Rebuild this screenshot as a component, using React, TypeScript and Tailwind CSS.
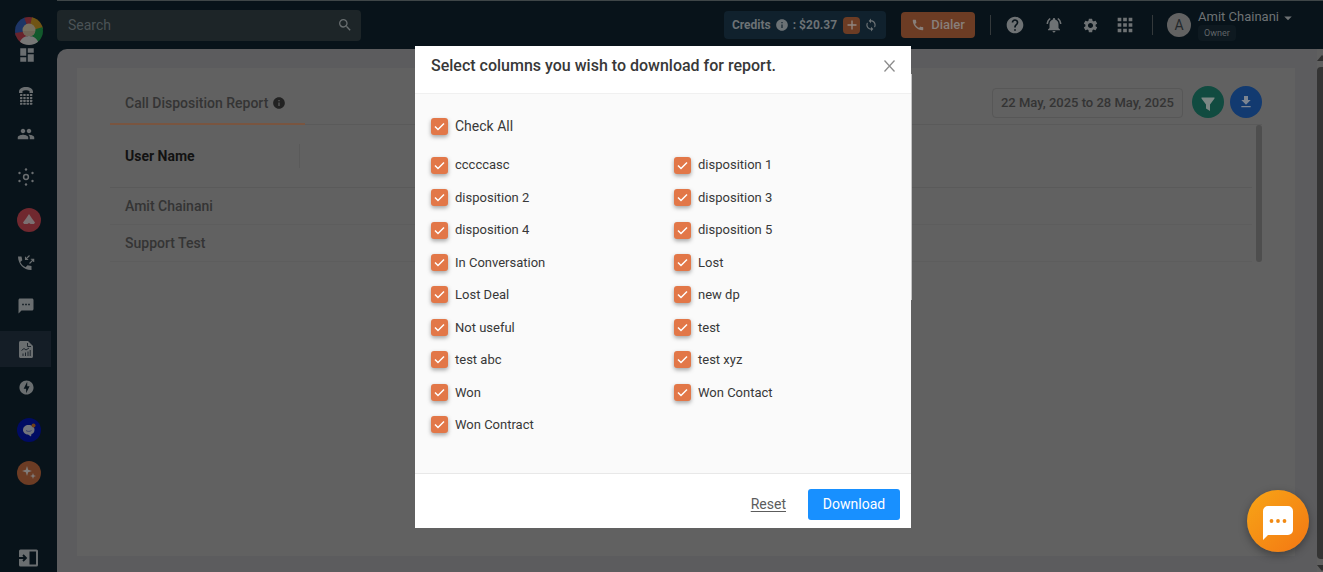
import { useState } from "react";
import type { ReactNode } from "react";
import {
  MdApps,
  MdArrowDropDown,
  MdCall,
  MdDashboard,
  MdFileDownload,
  MdGroup,
  MdHelp,
  MdInfo,
  MdLoop,
  MdNotificationsActive,
  MdOfflineBolt,
  MdSearch,
  MdSettings,
  MdSms,
} from "react-icons/md";

const columns = [
  "cccccasc",
  "disposition 1",
  "disposition 2",
  "disposition 3",
  "disposition 4",
  "disposition 5",
  "In Conversation",
  "Lost",
  "Lost Deal",
  "new dp",
  "Not useful",
  "test",
  "test abc",
  "test xyz",
  "Won",
  "Won Contact",
  "Won Contract",
];

function Logo() {
  return (
    <svg viewBox="0 0 28 28" className="size-7" aria-hidden="true">
      <defs>
        <clipPath id="logo-clip">
          <circle cx="14" cy="14" r="14" />
        </clipPath>
      </defs>
      <g clipPath="url(#logo-clip)">
        <path d="M14 14 0 20V0h10z" fill="#1d3566" />
        <path d="M14 14 9 0h9z" fill="#69242c" />
        <path d="M14 14 17 0h11v12z" fill="#705414" />
        <path d="M14 14 28 10v18h-8z" fill="#12592c" />
        <path d="M14 14 0 16v12h9z" fill="#69242c" />
        <circle cx="14" cy="13" r="6.500" fill="#77705f" />
        <path d="M4 28c1-6 5-9 10-9s9 3 10 9z" fill="#777776" />
        <path d="M8 14h12c0 3-2 5-6 5s-6-2-6-5z" fill="#706657" />
      </g>
    </svg>
  );
}

function KeypadPhone() {
  return (
    <svg viewBox="0 0 14 18" className="h-[18px] w-3.5" fill="currentColor" aria-hidden="true">
      <path d="M0 5C0 1.500 3 0 7 0s7 1.500 7 5v1h-3.500V4C9 3 5 3 3.500 4v2H0z" />
      {[7, 9.900, 12.800, 15.700].map((y) =>
        [1, 4.300, 7.600, 10.900].map((x) => <rect key={`${x}-${y}`} x={x} y={y} width="2.400" height="2.100" rx="0.500" />),
      )}
    </svg>
  );
}

function Hub() {
  return (
    <svg viewBox="0 0 16 18" className="h-[18px] w-4" aria-hidden="true">
      <circle cx="8" cy="9" r="2.400" fill="none" stroke="currentColor" strokeWidth="1.500" />
      {[
        [8, 1.500],
        [8, 16.500],
        [1.500, 5],
        [14.500, 5],
        [1.500, 13],
        [14.500, 13],
      ].map(([x, y]) => (
        <circle key={`${x}-${y}`} cx={x} cy={y} r="1.200" fill="currentColor" />
      ))}
    </svg>
  );
}

function CallArrows() {
  return (
    <svg viewBox="0 0 18 18" className="size-[18px]" aria-hidden="true">
      <path
        fill="currentColor"
        d="M1 2.500h3.500l.8 3.700-2 1.700c1.200 2.500 3 4.200 5.300 5.300l1.900-2 4 .9V16C7.500 16.500 1 10.500 1 2.500z"
      />
      <path
        fill="none"
        stroke="currentColor"
        strokeWidth="1.100"
        d="M12.500 1.500 8.500 5.500M8.500 2.800v2.700h2.700M12.500 9.500l4-4M13.800 5.200h2.900V8"
      />
    </svg>
  );
}

function ReportFile() {
  return (
    <svg viewBox="0 0 14 17" className="h-[17px] w-3.5" aria-hidden="true">
      <path fill="currentColor" d="M1.500 0H9l5 5v10.500c0 .8-.7 1.500-1.500 1.500h-11C.7 17 0 16.300 0 15.500v-14C0 .7.700 0 1.500 0z" />
      <path fill="none" stroke="#141d26" strokeWidth="0.900" d="M8.500 2V5.500H12M2.500 9.500l2.500-2 2 1.500 3-2M4 15v-2.500M6.500 15v-3.500M9 15v-4.500M11.200 15V9" />
    </svg>
  );
}

function AlertBadge() {
  return (
    <span className="grid size-6 place-items-center rounded-full bg-[#70282f] text-[#7c7072]">
      <svg viewBox="0 0 12 12" className="size-3" fill="currentColor" aria-hidden="true">
        <path d="M6 0 9 4.500 12 8.500 11 10H7.500L6 9 4.500 10H1L0 8.500 3 4.500z" />
      </svg>
    </span>
  );
}

function AssistantBadge() {
  return (
    <span className="grid size-6 place-items-center rounded-full bg-[#000b63] text-[#72747c]">
      <svg viewBox="0 0 14 14" className="size-3.5" aria-hidden="true">
        <path fill="currentColor" d="M6.500 2C3.500 2 1 4 1 7c0 2.500 2.500 4.500 5 4.500l3 2 .5-2.500c2-.5 3-2 3-4.500S10 2 6.500 2z" />
        <path fill="none" stroke="#30386c" strokeWidth="0.800" d="M4 7.500c1.500 1.200 4 1.200 5.500 0" />
        <circle cx="11.500" cy="2.500" r="2" fill="#704018" />
      </svg>
    </span>
  );
}

function SparkBadge() {
  return (
    <span className="grid size-6 place-items-center rounded-full bg-[#6c3c24] text-[#807c7a]">
      <svg viewBox="0 0 14 14" className="size-3.5" fill="currentColor" aria-hidden="true">
        <path d="M5 0 6.200 3.800 10 5 6.200 6.200 5 10 3.800 6.200 0 5l3.800-1.200z" />
        <path d="m11 7 .8 2.200L14 10l-2.200.8L11 13l-.8-2.200L8 10l2.200-.8z" />
      </svg>
    </span>
  );
}

type NavEntry = { label: string; icon: ReactNode; tight?: boolean; badge?: boolean; active?: boolean };

const navEntries: NavEntry[] = [
  { label: "Dial pad", icon: <KeypadPhone /> },
  { label: "Contacts", icon: <MdGroup className="size-[18px]" />, tight: true },
  { label: "Integrations", icon: <Hub /> },
  { label: "Alerts", icon: <AlertBadge />, badge: true },
  { label: "Calls", icon: <CallArrows /> },
  { label: "Messages", icon: <MdSms className="size-[18px]" /> },
  { label: "Reports", icon: <ReportFile />, active: true },
  { label: "Automation", icon: <MdOfflineBolt className="size-[17px]" />, tight: true },
  { label: "Assistant", icon: <AssistantBadge />, badge: true },
  { label: "AI tools", icon: <SparkBadge />, badge: true },
];

function Sidebar() {
  return (
    <aside className="flex w-[57px] shrink-0 flex-col bg-[#08131a] pt-[17px] text-[#6a6e70]">
      <a href="#home" aria-label="Home" className="ml-[15px] block size-7">
        <Logo />
      </a>
      <a href="#dashboard" aria-label="Dashboard" className="flex h-5 w-[51px] items-center justify-center pl-0.5">
        <MdDashboard className="size-[18px]" />
      </a>
      <ul className="pt-1.5">
        {navEntries.map((entry) => (
          <li key={entry.label} className={entry.tight ? "mt-0.5" : "mt-[7px]"}>
            <a
              href="#nav"
              aria-label={entry.label}
              className={`flex h-9 w-[51px] items-center justify-center ${entry.badge ? "pl-[7px]" : "pl-px"} ${entry.active ? "bg-[#141d26]" : ""}`}
            >
              {entry.icon}
            </a>
          </li>
        ))}
      </ul>
      <button type="button" aria-label="Expand menu" className="mt-auto mb-[5px] ml-[19px] block">
        <svg viewBox="0 0 19 18" className="h-[18px] w-[19px]" aria-hidden="true">
          <rect width="19" height="17" y="0.500" rx="1.500" fill="currentColor" />
          <rect x="10.500" y="2.500" width="6.500" height="13" fill="#08131a" />
          <path d="M0 9h6.500M4 6l3 3-3 3" fill="none" stroke="#08131a" strokeWidth="1.800" />
        </svg>
      </button>
    </aside>
  );
}

function Header() {
  return (
    <header className="flex h-[49px] items-center border-t border-[#3f4648] bg-[#08131a] pr-[30px] text-[#6e7274]">
      <label className="flex h-[31px] w-[304px] items-center rounded-sm bg-[#1d2528] pr-2 pl-[11px]">
        <input
          type="search"
          aria-label="Search"
          placeholder="Search"
          className="min-w-0 flex-1 bg-transparent text-sm outline-none placeholder:text-[#4b5356]"
        />
        <MdSearch className="size-4 text-[#686d6f]" />
      </label>
      <div className="ml-auto flex h-7 items-center rounded bg-[#10212d] px-2 text-[12px] font-bold text-[#6c7275]">
        <span>Credits</span>
        <MdInfo className="mx-1 size-3.5" />
        <span>: $20.37</span>
        <button type="button" aria-label="Add credits" className="mr-1 ml-1.5 grid size-[17px] place-items-center rounded-sm bg-[#6c3c24] text-[#908681]">
          <svg viewBox="0 0 10 10" className="size-2.5" aria-hidden="true">
            <path d="M5 .5v9M.5 5h9" stroke="currentColor" strokeWidth="1.400" />
          </svg>
        </button>
        <button type="button" aria-label="Refresh credits">
          <MdLoop className="size-3.5" />
        </button>
      </div>
      <button type="button" className="ml-[15px] flex h-[26px] w-[74px] items-center justify-center gap-1.5 rounded-sm bg-[#6c3c24] text-[13px] font-medium text-[#887f7a]">
        <MdCall className="size-3.5" />
        Dialer
      </button>
      <div className="ml-[15px] h-5 w-px bg-[#34393b]" />
      <button type="button" aria-label="Help" className="ml-[14px]">
        <MdHelp className="size-5" />
      </button>
      <button type="button" aria-label="Notifications" className="ml-5">
        <MdNotificationsActive className="size-[18px]" />
      </button>
      <button type="button" aria-label="Settings" className="ml-[19px]">
        <MdSettings className="size-[17px]" />
      </button>
      <button type="button" aria-label="Apps" className="ml-[15px]">
        <MdApps className="size-[22px]" />
      </button>
      <div className="ml-4 h-5 w-px bg-[#34393b]" />
      <span className="ml-[14px] grid size-6 place-items-center rounded-full bg-[#626262] text-sm text-[#23282b]">A</span>
      <button type="button" className="ml-[7px] flex items-start text-left">
        <span className="flex flex-col items-start">
          <span className="text-[13px] leading-4">Amit Chainani</span>
          <span className="rounded-sm bg-[#0e1920] px-1.5 text-[9px] leading-4 text-[#606568]">Owner</span>
        </span>
        <MdArrowDropDown className="-mr-1 size-[18px]" />
      </button>
    </header>
  );
}

function Report() {
  return (
    <main className="flex flex-1 rounded-tl-[10px] bg-[#5c5c5e] font-medium text-[#343434]">
      <section className="mt-[19px] mr-[22px] mb-4 ml-5 min-w-0 flex-1 bg-[#616161] pr-[33px] pl-[33px] pt-5">
        <div className="flex h-9 items-start">
          <a href="#report" className="flex h-[37px] w-[195px] items-center border-b-2 border-[#795540] pb-1.5 pl-[15px] text-sm">
            Call Disposition Report
            <MdInfo className="ml-1 size-3.5 text-[#222222]" />
          </a>
          <button type="button" className="ml-auto h-[30px] rounded-sm border border-[#575757] px-2 text-[13px]">
            22 May, 2025 to 28 May, 2025
          </button>
          <button type="button" aria-label="Filter" className="-mt-0.5 ml-[9px] grid size-8 place-items-center rounded-full bg-[#114b40] text-[#7c8784]">
            <svg viewBox="0 0 14 14" className="mt-1 size-3.5" fill="currentColor" aria-hidden="true">
              <path d="M.5.500h13v1L9 7.500V14l-4-2.500v-4L.5 1.500z" />
            </svg>
          </button>
          <button type="button" aria-label="Download report" className="-mt-0.5 ml-1.5 grid size-8 place-items-center rounded-full bg-[#123a70] text-[#7c8591]">
            <MdFileDownload className="size-4" />
          </button>
        </div>
        <div className="flex border-t border-[#5a5a5a]">
          <table className="flex-1 text-left text-sm">
            <thead className="block">
              <tr className="flex h-[63px] items-center border-b border-[#5a5a5a]">
                <th scope="col" className="w-[190px] border-r border-[#5a5a5a] pl-[15px] leading-6 font-bold text-[#121212]">
                  User Name
                </th>
              </tr>
            </thead>
            <tbody className="block">
              {["Amit Chainani", "Support Test"].map((name) => (
                <tr key={name} className="flex h-[37px] items-center border-b border-[#5d5d5d]">
                  <td className="pl-[15px]">{name}</td>
                </tr>
              ))}
            </tbody>
          </table>
          <div className="ml-1 h-[137px] w-1.5 rounded-full bg-[#4e4e4e]" />
        </div>
      </section>
      <div className="flex w-1.5 flex-col bg-[#5f5f5f] pt-1.5 pb-px text-[#2f2f2f]" aria-hidden="true">
        <svg viewBox="0 0 6 6" className="size-1.5" fill="currentColor">
          <path d="M0 6 5 0l1 1v5z" />
        </svg>
        <div className="my-1.5 flex-1 rounded-l bg-[#343434]" />
        <svg viewBox="0 0 6 6" className="size-1.5" fill="currentColor">
          <path d="M0 0h6v5L5 6z" />
        </svg>
      </div>
    </main>
  );
}

type TickProps = { label: string; checked: boolean; large?: boolean; onChange: (checked: boolean) => void };

function Tick({ label, checked, large, onChange }: TickProps) {
  return (
    <label className={`flex items-center gap-[7px] ${large ? "text-sm" : "text-[13px]"}`}>
      <span className="grid size-[17px] place-items-center">
        <input
          type="checkbox"
          checked={checked}
          onChange={(event) => onChange(event.target.checked)}
          className="peer col-start-1 row-start-1 size-[17px] appearance-none rounded-[3px] bg-white shadow-[0_2px_4px_rgba(0,0,0,0.35)] checked:bg-[#e27748]"
        />
        <svg viewBox="0 0 11 9" className="pointer-events-none invisible col-start-1 row-start-1 h-[9px] w-[11px] peer-checked:visible" aria-hidden="true">
          <path d="m1 4.500 3 3L10 1.500" fill="none" stroke="#fff" strokeWidth="1.500" />
        </svg>
      </span>
      {label}
    </label>
  );
}

function ColumnsDialog() {
  const [selected, setSelected] = useState<string[]>(columns);
  const toggle = (name: string, on: boolean) =>
    setSelected((current) => (on ? [...current, name] : current.filter((item) => item !== name)));

  return (
    <div className="fixed inset-0 flex items-start justify-center pt-[46px] pl-[3px]">
      <div role="dialog" aria-modal="true" aria-labelledby="dialog-title" className="relative w-[496px] bg-white text-[#383838]">
        <div className="absolute top-7 left-full h-[226px] w-px bg-[#c4c4c4]" />
        <div className="flex h-12 items-center justify-between border-b border-[#f0f0f0] pr-4 pb-2 pl-4">
          <h2 id="dialog-title" className="text-[16px] font-medium">
            Select columns you wish to download for report.
          </h2>
          <button type="button" aria-label="Close" className="text-[#8c8c8c]">
            <svg viewBox="0 0 11 12" className="h-3 w-[11px]" aria-hidden="true">
              <path d="m.5.5 10 11M10.500.5l-10 11" stroke="currentColor" strokeWidth="1.300" />
            </svg>
          </button>
        </div>
        <div className="h-[379px] bg-[#fafafa] px-4 pt-[22px]">
          <Tick
            label="Check All"
            large
            checked={selected.length === columns.length}
            onChange={(on) => setSelected(on ? columns : [])}
          />
          <div className="mt-[13px] grid h-[292px] grid-cols-[243px_1fr]">
            {columns.map((name) => (
              <Tick key={name} label={name} checked={selected.includes(name)} onChange={(on) => toggle(name, on)} />
            ))}
          </div>
        </div>
        <div className="flex h-[55px] items-center justify-end gap-[22px] border-t border-[#e8e8e8] pt-1.5 pr-[11px] text-sm">
          <button type="button" onClick={() => setSelected(columns)} className="text-[#5c5c5c] underline underline-offset-2">
            Reset
          </button>
          <button type="button" className="h-[31px] w-[92px] rounded-[3px] bg-[#1890ff] text-white">
            Download
          </button>
        </div>
      </div>
    </div>
  );
}

export default function App() {
  return (
    <div className="flex min-h-screen bg-[#08131a] font-['Roboto',sans-serif]">
      <Sidebar />
      <div className="flex min-w-0 flex-1 flex-col">
        <Header />
        <Report />
      </div>
      <ColumnsDialog />
      <button
        type="button"
        aria-label="Open chat"
        className="fixed right-3.5 bottom-5 grid size-[62px] place-items-center rounded-full bg-linear-to-br from-[#f7a516] to-[#f37613] shadow-[0_3px_8px_rgba(0,0,0,0.35)]"
      >
        <svg viewBox="0 0 30 34" className="mt-1 h-[34px] w-[30px]" aria-hidden="true">
          <path d="M5 0h20a5 5 0 0 1 5 5v19a5 5 0 0 1-5 5H5l-5 5V5a5 5 0 0 1 5-5z" fill="#fff" />
          <circle cx="8.500" cy="15" r="1.900" fill="#f18a14" />
          <circle cx="15" cy="15" r="1.900" fill="#f18a14" />
          <circle cx="21.500" cy="15" r="1.900" fill="#f18a14" />
        </svg>
      </button>
    </div>
  );
}
